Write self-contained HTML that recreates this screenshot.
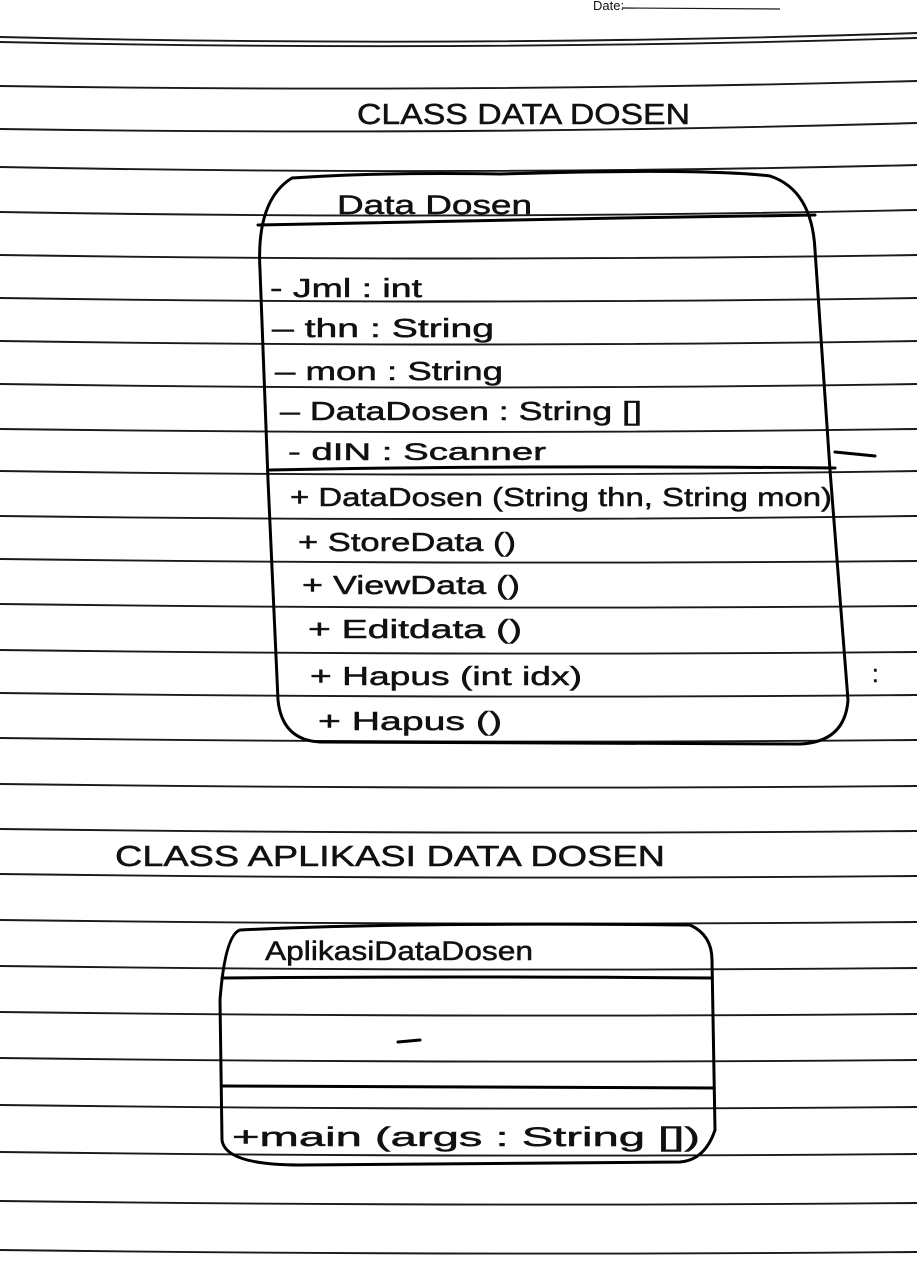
<!DOCTYPE html>
<html><head><meta charset="utf-8"><style>
html,body{margin:0;padding:0;background:#fff}
svg{display:block}
text{font-family:"Liberation Sans",sans-serif;fill:#111;stroke:#111;stroke-width:0.5}
</style></head><body>
<svg width="917" height="1280" viewBox="0 0 917 1280" xmlns="http://www.w3.org/2000/svg">
<g stroke="#1a1a1a" stroke-width="1.9" fill="none">
<path d="M0 37 Q460 48 917 33"/>
<path d="M0 42 Q460 52 917 38"/>
<path d="M0 86 Q460 93 917 81"/>
<path d="M0 129 Q460 136 917 123"/>
<path d="M0 167 Q460 176 917 165"/>
<path d="M0 212 Q460 220 917 210"/>
<path d="M0 255 Q460 262 917 255"/>
<path d="M0 298 Q460 305 917 298"/>
<path d="M0 341 Q460 348 917 341"/>
<path d="M0 384 Q460 391 917 384"/>
<path d="M0 429 Q460 435 917 429"/>
<path d="M0 471 Q460 478 917 471"/>
<path d="M0 516 Q460 522 917 516"/>
<path d="M0 559 Q460 565 917 561"/>
<path d="M0 604 Q460 610 917 606"/>
<path d="M0 650 Q460 656 917 652"/>
<path d="M0 693 Q460 699 917 695"/>
<path d="M0 738 Q460 744 917 740"/>
<path d="M0 784 Q460 790 917 786"/>
<path d="M0 829 Q460 835 917 831"/>
<path d="M0 874 Q460 880 917 876"/>
<path d="M0 920 Q460 926 917 922"/>
<path d="M0 966 Q460 972 917 968"/>
<path d="M0 1012 Q460 1018 917 1014"/>
<path d="M0 1058 Q460 1064 917 1060"/>
<path d="M0 1105 Q460 1111 917 1107"/>
<path d="M0 1152 Q460 1158 917 1154"/>
<path d="M0 1201 Q460 1207 917 1203"/>
<path d="M0 1250 Q460 1256 917 1252"/>
<path d="M622 8 L780 9" stroke-width="1.2"/>
</g>
<text x="593" y="10" font-size="13" style="stroke-width:0">Date:</text>
<g stroke="#000" stroke-width="3" fill="none" stroke-linecap="round">
<path d="M292 178 Q380 172 500 174 Q700 168 770 176 Q812 190 815 250 L830 470 L848 700 Q845 742 800 744 L320 742 Q282 740 278 700 L268 480 L260 270 Q256 200 292 178 Z"/>
<path d="M258 225 Q450 222 620 218 L815 215"/>
<path d="M270 470 Q500 465 835 468"/>
<path d="M835 452 L875 456"/>
<path d="M240 930 Q400 922 690 925 Q712 935 712 960 L715 1130 Q705 1160 680 1162 L300 1165 Q225 1165 222 1140 L220 1000 Q225 935 240 930 Z"/>
<path d="M222 978 Q450 976 712 978"/>
<path d="M222 1086 Q450 1088 713 1088"/>
<path d="M398 1042 L420 1040"/>
</g>
<text x="357" y="124" font-size="29" textLength="333" lengthAdjust="spacingAndGlyphs">CLASS DATA DOSEN</text>
<text x="337" y="214" font-size="27" textLength="195" lengthAdjust="spacingAndGlyphs">Data Dosen</text>
<text x="270" y="297" font-size="26" textLength="152" lengthAdjust="spacingAndGlyphs">- Jml : int</text>
<text x="272" y="337" font-size="26" textLength="222" lengthAdjust="spacingAndGlyphs">– thn : String</text>
<text x="275" y="380" font-size="26" textLength="228" lengthAdjust="spacingAndGlyphs">– mon : String</text>
<text x="280" y="420" font-size="26" textLength="362" lengthAdjust="spacingAndGlyphs">– DataDosen : String []</text>
<text x="288" y="460" font-size="24" textLength="258" lengthAdjust="spacingAndGlyphs">- dIN : Scanner</text>
<text x="290" y="506" font-size="26" textLength="542" lengthAdjust="spacingAndGlyphs">+ DataDosen (String thn, String mon)</text>
<text x="298" y="551" font-size="26" textLength="218" lengthAdjust="spacingAndGlyphs">+ StoreData ()</text>
<text x="302" y="594" font-size="26" textLength="218" lengthAdjust="spacingAndGlyphs">+ ViewData ()</text>
<text x="308" y="638" font-size="26" textLength="214" lengthAdjust="spacingAndGlyphs">+ Editdata ()</text>
<text x="310" y="685" font-size="26" textLength="272" lengthAdjust="spacingAndGlyphs">+ Hapus (int idx)</text>
<text x="318" y="730" font-size="26" textLength="184" lengthAdjust="spacingAndGlyphs">+ Hapus ()</text>
<text x="872" y="682" font-size="24">:</text>
<text x="115" y="866" font-size="29" textLength="550" lengthAdjust="spacingAndGlyphs">CLASS  APLIKASI  DATA  DOSEN</text>
<text x="265" y="960" font-size="27" textLength="268" lengthAdjust="spacingAndGlyphs">AplikasiDataDosen</text>
<text x="232" y="1146" font-size="27" textLength="468" lengthAdjust="spacingAndGlyphs">+main (args : String [])</text>
</svg>
</body></html>
